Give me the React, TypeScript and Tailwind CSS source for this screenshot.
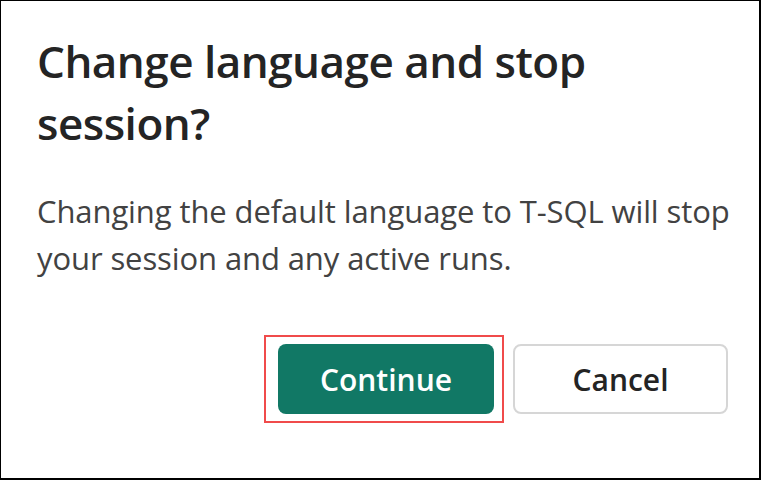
export default function App() {
  return (
    <div className="w-[761px] h-[480px] bg-white border border-black border-r-2 border-b-2 box-border overflow-hidden" style={{ fontFamily: '"Open Sans", "Noto Sans", sans-serif' }}>
      <div className="flex flex-col pl-[36px] pr-[20px] pt-[29px]">
        <h1 className="text-[44px] leading-[62px] font-semibold text-[#242424] tracking-[-0.5px] pr-[80px]">
          Change language and stop session?
        </h1>
        <p className="mt-[34px] text-[31px] leading-[47px] text-[#424242] tracking-[-0.1px]">
          Changing the default language to T-SQL will stop your session and any active runs.
        </p>
        <div className="flex justify-end gap-[19px] mt-[62px] pr-[11px]">
          <div className="relative">
            <button className="w-[216px] h-[70px] rounded-[8px] bg-[#117865] text-white text-[30px] font-semibold">
              Continue
            </button>
            <div className="absolute left-[-14px] right-[-10px] top-[-9px] bottom-[-9px] border-2 border-[#f04b4b] pointer-events-none" />
          </div>
          <button className="w-[215px] h-[70px] rounded-[8px] bg-white border-2 border-[#d6d6d6] text-[#242424] text-[30px] font-semibold">
            Cancel
          </button>
        </div>
      </div>
    </div>
  );
}
